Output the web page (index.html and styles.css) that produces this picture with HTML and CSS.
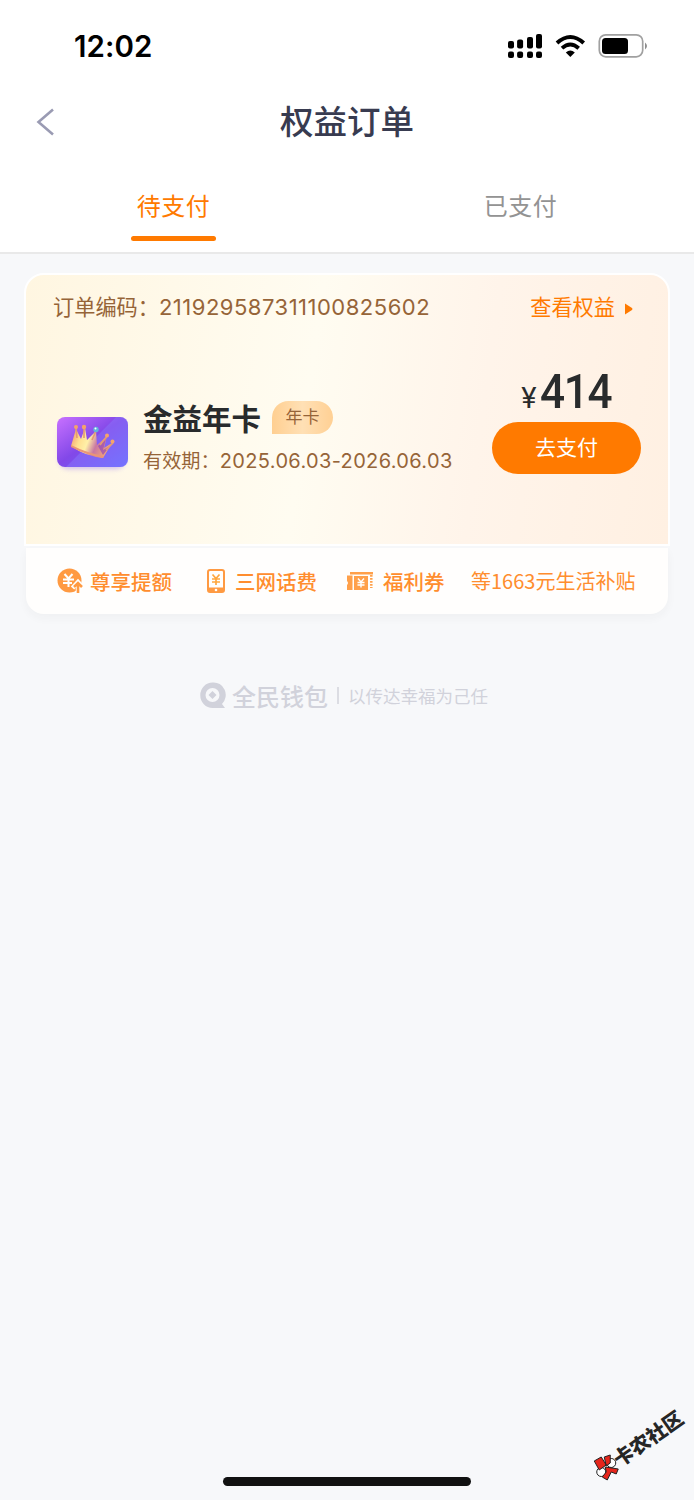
FILE: index.html
```html
<!DOCTYPE html>
<html lang="zh-CN">
<head>
<meta charset="utf-8">
<title>权益订单</title>
<link rel="stylesheet" href="styles.css">
</head>
<body>
<header class="header">
  <div class="status">
    <span class="clock">12:02</span>
    <svg class="status-icons" width="142" height="28" viewBox="0 0 142 28">
      <g fill="#000">
        <rect x="3" y="9" width="6" height="7.5" rx="2"/><rect x="12.100" y="7.500" width="6" height="9" rx="2"/><rect x="22" y="5" width="6" height="11.500" rx="2"/><rect x="31" y="2" width="6" height="14.500" rx="2"/>
        <rect x="3" y="19.500" width="6" height="6.500" rx="2"/><rect x="12.100" y="19.500" width="6" height="6.500" rx="2"/><rect x="22" y="19.500" width="6" height="6.500" rx="2"/><rect x="31" y="19.500" width="6" height="6.500" rx="2"/>
        <path d="M65.300 25 L60.800 20.400 Q65.300 16.800 69.800 20.400Z"/>
      </g>
      <path d="M52 11 Q65.300 -1 78.700 11" fill="none" stroke="#000" stroke-width="4"/>
      <path d="M57 16.200 Q65.300 8.800 73.700 16.200" fill="none" stroke="#000" stroke-width="3.800"/>
      <rect x="94.300" y="2.800" width="43.400" height="22" rx="6.500" fill="none" stroke="#a0a0a0" stroke-width="1.700"/>
      <rect x="97" y="6" width="26" height="16" rx="3.500"/>
      <path d="M140 10.500 Q144 13.800 140 17.500Z" fill="#8c8c8c"/>
    </svg>
  </div>
  <div class="nav">
    <svg class="back" width="20" height="28" viewBox="0 0 20 28"><path d="M17 1.500 L2.500 14 L17 26.500" fill="none" stroke="#9a9bb3" stroke-width="2.600"/></svg>
    <h1 class="title">权益订单</h1>
  </div>
  <nav class="tabs">
    <div class="tab tab-active">待支付</div>
    <div class="tab">已支付</div>
  </nav>
</header>
<main class="main">
  <section class="card">
    <div class="order">
      <div class="order-head">
        <div class="order-no">订单编码：<span class="num order-num">211929587311100825602</span></div>
        <div class="view">查看权益<svg width="10" height="12" viewBox="0 0 10 12"><path d="M1 .5 L8 5 Q9 6 8 7 L1 11.500Z" fill="#ff7a00"/></svg></div>
      </div>
      <div class="order-body">
        <svg class="crown" width="84" height="68" viewBox="0 0 84 68">
          <defs>
            <linearGradient id="tile" x1="0" y1="0" x2="1" y2="1"><stop offset="0" stop-color="#c871ff"/><stop offset=".48" stop-color="#8248e8"/><stop offset="1" stop-color="#656cff"/></linearGradient>
            <linearGradient id="gold" x1="0" y1="0" x2="1" y2=".3"><stop offset="0" stop-color="#ee8a68"/><stop offset=".3" stop-color="#ffdf90"/><stop offset=".5" stop-color="#fff0a8"/><stop offset=".72" stop-color="#c977a3"/><stop offset="1" stop-color="#f3a479"/></linearGradient>
            <filter id="soft" x="-20%" y="-20%" width="140%" height="150%"><feGaussianBlur stdDeviation="2.500"/></filter>
          </defs>
          <rect x="9" y="15" width="66" height="45" rx="9" fill="#b9a2ec" opacity=".65" filter="url(#soft)"/>
          <rect x="7" y="8" width="71" height="50" rx="8" fill="url(#tile)"/>
          <path d="M66 8 H70 Q78 8 78 16 V50 Q78 58 70 58 H16Z" fill="#8c80ff" opacity=".4"/>
          <path d="M21 37 L26 20 L31 30 L35 19 L37 31 L46 22 L47 36 L57 27 L54 39 L62 34 L53 49 Q35 47 21 37Z" fill="url(#gold)"/>
          <path d="M21 36 Q37 44 54 47 L53 49 Q36 46 21 38Z" fill="#e99577"/>
          <path d="M48 37 L56 30 L53 41 L60 37 L53 46Z" fill="#8d42bd" opacity=".65"/>
          <g stroke="#e49a72" stroke-width="1.600" fill="none"><path d="M26 19 L27 29M34 18 L34 29M46 22 L42 31M57 27 L50 36M63 34 L56 41"/></g>
          <g fill="#f5a36b"><circle cx="26" cy="18" r="2"/><circle cx="34" cy="18" r="2.200"/><circle cx="57" cy="26.500" r="2"/><circle cx="62.500" cy="32.500" r="2"/></g>
          <circle cx="46" cy="20.500" r="2.700" fill="#61b4dc"/><circle cx="45.500" cy="19.500" r="1" fill="#fff"/>
        </svg>
        <div class="info">
          <div class="name-row"><span class="name">金益年卡</span><span class="tag">年卡</span></div>
          <div class="valid">有效期：<span class="num valid-num">2025.06.03-2026.06.03</span></div>
        </div>
        <div class="pay">
          <div class="price"><span class="yen">¥</span><span class="amount">414</span></div>
          <div class="pay-btn">去支付</div>
        </div>
      </div>
    </div>
    <div class="benefits">
      <div class="benefit b1">
        <svg width="27" height="26" viewBox="0 0 27 26"><circle cx="12.500" cy="12.500" r="12" fill="#ff9a42"/><path d="M7.500 6 L11.500 10.500 L15.500 6M6 11.500H17M6 15H15M11.500 10V19" fill="none" stroke="#fff" stroke-width="2"/><path d="M21 26V17M15.500 20L21 14L26.500 20" fill="none" stroke="#fffefd" stroke-width="4.500"/><path d="M21 25V15M17 19L21 15L25 19" fill="none" stroke="#ff9a42" stroke-width="2.600"/></svg>
        <span>尊享提额</span>
      </div>
      <div class="benefit b2">
        <svg width="18" height="24" viewBox="0 0 18 24"><rect x="1" y="1" width="16" height="22" rx="2" fill="none" stroke="#ff9a42" stroke-width="2"/><path d="M1 18.500H17V23H1Z" fill="#ff9a42"/><circle cx="9" cy="21" r="1.300" fill="#fff"/><path d="M5.500 5.500L9 9.500L12.500 5.500M5 10H13M5 13H13M9 9V16" fill="none" stroke="#ffa63d" stroke-width="1.700"/></svg>
        <span>三网话费</span>
      </div>
      <div class="benefit b3">
        <svg width="26" height="18" viewBox="0 0 26 18"><path d="M3 0H26V2.500H3ZM0 3.500H5.500V18H0V13Q2 11 0 9ZM7 4H21V18H7Z" fill="#ffa04a"/><path d="M24.300 3V16" stroke="#ffa04a" stroke-width="2.500" stroke-dasharray="1.800 1.200"/><path d="M11 6.500L14 10L17 6.500M10.500 10.500H17.500M10.500 13H17.500M14 10V15.500" fill="none" stroke="#fff" stroke-width="1.400"/></svg>
        <span>福利券</span>
      </div>
      <div class="benefit b4">等1663元生活补贴</div>
    </div>
  </section>
  <div class="brand">
    <svg width="27" height="27" viewBox="0 0 27 27"><path d="M12.500 .5A12 12.500 0 1 0 12.500 26H25L22 22A12 12.500 0 0 0 12.500 .5Z" fill="#d1d2db"/><circle cx="12.500" cy="13" r="7" fill="#f7f8fa"/><path d="M12.500 9L16.500 13L12.500 17L8.500 13Z" fill="#d1d2db"/></svg>
    <span class="brand-name">全民钱包</span><i class="divider"></i><span class="slogan">以传达幸福为己任</span>
  </div>
</main>
<div class="home-bar"></div>
<div class="watermark">
  <svg width="27" height="27" viewBox="0 0 27 27"><g stroke="#222" stroke-width="1"><circle cx="18" cy="9" r="4.500" fill="#fff"/><circle cx="8" cy="18" r="4.500" fill="#fff"/><path d="M1 7L8 3L13 11L6 16Z M11 3L17 1V9L13 12Z M12 13L25 15L23 20L18 18L14 26L9 23L13 18Z" fill="#e5261c"/></g></svg>
  <span class="watermark-text">卡农社区</span>
</div>
</body>
</html>
```
FILE: styles.css
```css
* { box-sizing: border-box; }
body {
  margin: 0;
  width: 694px;
  height: 1500px;
  position: relative;
  overflow: hidden;
  display: flex;
  flex-direction: column;
  background: #f7f8fa;
  font-family: "Liberation Sans", "Noto Sans CJK SC", sans-serif;
  white-space: nowrap;
}
svg { display: block; flex: none; }
.header { height: 254px; background: #fff; border-bottom: 2px solid #e9e9e9; }
.status {
  height: 92px;
  display: flex;
  justify-content: space-between;
  padding: 32px 47px 0 74px;
}
.clock { font: 600 29.500px/29px Inter, sans-serif; letter-spacing: .1px; }
.nav { height: 60px; padding: 0 36px; display: grid; grid-template-columns: 20px 1fr 20px; align-items: center; }
.title { margin: -4px 0 0; text-align: center; color: #383b50; font: 500 33.5px/48px "Noto Sans CJK SC", sans-serif; }
.tabs { height: 100px; display: grid; grid-template-columns: 1fr 1fr; }
.tab {
  display: flex;
  flex-direction: column;
  align-items: center;
  padding-top: 35px;
  font: 400 24px/36px "Noto Sans CJK SC", sans-serif;
  letter-spacing: .5px;
  color: #939393;
}
.tab-active { color: #ff7a00; }
.tab-active::after { content: ""; width: 85px; height: 5px; margin-top: 13px; border-radius: 3px; background: #ff7a00; }
.main { padding: 19px 24px 0; }
.order {
  height: 273px;
  border: 2px solid #fff;
  border-radius: 20px 20px 0 0;
  background: linear-gradient(98deg, #fff6e1 0%, #fffcf1 44%, #fff4ea 70%, #fff0e2 100%);
}
.order-head {
  height: 62px;
  padding: 0 34px 0 27px;
  display: flex;
  justify-content: space-between;
  align-items: center;
  color: #966438;
  font: 400 21.200px/30px "Noto Sans CJK SC", sans-serif;
}
.num { font-family: Inter, sans-serif; }
.order-num { font-size: 22px; letter-spacing: .5px; }
.view { display: flex; align-items: center; gap: 9px; color: #ff7a00; }
.view svg { margin-top: 5px; }
.order-body { display: flex; padding: 0 27px 0 24px; }
.crown { margin-top: 72px; }
.info { flex: 1; padding: 64px 0 0 9px; }
.name-row { display: flex; height: 34px; gap: 11px; }
.name { margin-top: -1px; color: #292b2c; font: 700 29.500px/34px "Noto Sans CJK SC", sans-serif; }
.tag {
  width: 61px;
  height: 33px;
  border-radius: 16.500px 16.500px 16.500px 0;
  background: linear-gradient(90deg, #ffcf91, #ffe0b5 50%, #ffd094);
  text-align: center;
  color: #966438;
  font: 400 17px/29px "Noto Sans CJK SC", sans-serif;
}
.valid { margin-top: 10px; color: #966438; font: 400 19.200px/30px "Noto Sans CJK SC", sans-serif; }
.valid-num { font-size: 20px; letter-spacing: .35px; }
.pay { width: 149px; padding-top: 28px; }
.price { height: 57px; display: flex; justify-content: center; align-items: baseline; color: #292b2c; }
.yen { font: 400 29px/53px Roboto, sans-serif; margin-right: 3px; }
.amount {
  margin-right: -7px;
  font: 500 49px/53px Roboto, sans-serif;
  letter-spacing: -1.500px;
  transform: scaleX(.9);
  transform-origin: left;
}
.pay-btn {
  height: 52px;
  border-radius: 26px;
  background: #ff7a00;
  color: #fff;
  text-align: center;
  font: 400 21px/49px "Noto Sans CJK SC", sans-serif;
}
.benefits {
  height: 66px;
  margin: 2px 2px 0;
  border-radius: 0 0 18px 18px;
  background: #fffefd;
  box-shadow: 0 4px 10px rgba(40, 40, 40, .04);
  padding: 0 0 0 31px;
  display: flex;
  align-items: center;
  color: #ff8d2e;
  font: 500 20.500px/30px "Noto Sans CJK SC", sans-serif;
}
.benefit { display: flex; align-items: center; }
.b1 { gap: 6px; width: 150px; }
.b2 { gap: 10px; width: 140px; }
.b3 { gap: 10px; width: 124px; }
.b4 { font-weight: 400; font-size: 20px; }
.brand {
  margin-top: 68px;
  padding-left: 176px;
  height: 27px;
  display: flex;
  align-items: center;
  color: #d1d2db;
}
.brand-name { margin-left: 5px; font: 500 24px/27px "Noto Sans CJK SC", sans-serif; }
.divider { width: 2px; height: 17px; margin: 0 9px; background: #dcdde3; }
.slogan { font: 400 17.500px/27px "Noto Sans CJK SC", sans-serif; }
.home-bar { position: absolute; left: 223px; top: 1477px; width: 248px; height: 9px; border-radius: 5px; background: #111; }
.watermark {
  position: absolute;
  left: 586px;
  top: 1431px;
  display: flex;
  align-items: center;
  transform: rotate(-35deg);
  color: #262626;
  font: 900 20px/28px "Noto Sans CJK SC", sans-serif;
}
.watermark svg { transform: rotate(35deg); }
.watermark-text { margin-left: -3px; }
```
